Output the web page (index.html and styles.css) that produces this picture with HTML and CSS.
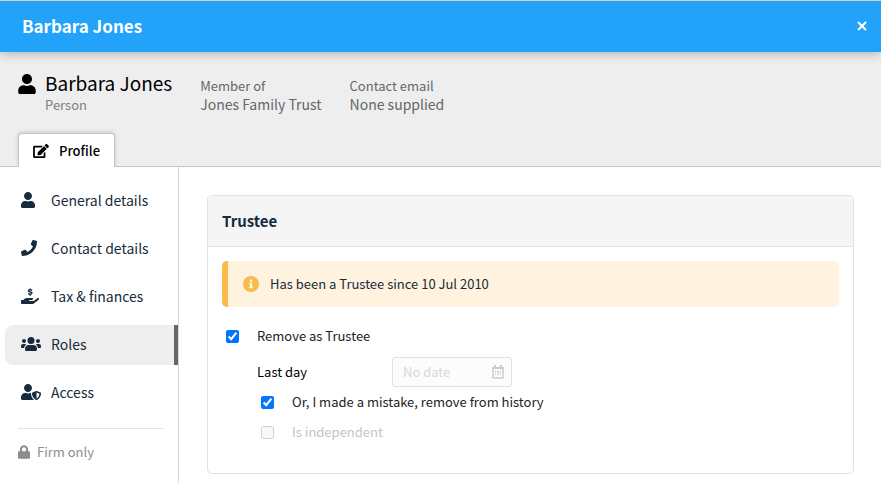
FILE: index.html
```
<!DOCTYPE html>
<html lang="en">
<head>
  <meta charset="UTF-8">
  <meta name="viewport" content="width=device-width, initial-scale=1">
  <title>Barbara Jones - Roles</title>
  <link rel="stylesheet" href="styles.css">
</head>
<body>

  <header class="titlebar">
    <h1>Barbara Jones</h1>
    <button type="button" class="close" aria-label="Close">
      <svg width="10" height="10" viewBox="0 0 10 10"><path d="M1 1l8 8M9 1l-8 8" stroke="currentColor" stroke-width="2"/></svg>
    </button>
  </header>

  <section class="summary">
    <div class="person">
      <svg class="person-icon" width="18" height="20" viewBox="0 0 448 512"><path d="M224 256c70.700 0 128-57.300 128-128S294.700 0 224 0 96 57.300 96 128s57.300 128 128 128zm89.600 32h-16.700c-22.200 10.200-46.900 16-72.900 16s-50.600-5.800-72.900-16h-16.700C60.200 288 0 348.200 0 422.400V464c0 26.500 21.500 48 48 48h352c26.500 0 48-21.500 48-48v-41.600c0-74.200-60.200-134.400-134.400-134.400z"/></svg>
      <div class="person-name">
        <h2>Barbara Jones</h2>
        <p>Person</p>
      </div>
      <dl class="fact">
        <dt>Member of</dt>
        <dd>Jones Family Trust</dd>
      </dl>
      <dl class="fact">
        <dt>Contact email</dt>
        <dd>None supplied</dd>
      </dl>
    </div>

    <nav class="tabs">
      <a href="#profile" class="tab">
        <svg width="16" height="14" viewBox="0 0 576 512"><path d="M402.600 83.200l90.200 90.200c3.800 3.800 3.800 10 0 13.800L274.400 405.600l-92.800 10.300c-12.400 1.400-22.900-9.100-21.500-21.500l10.300-92.800L388.800 83.200c3.800-3.800 10-3.800 13.800 0zm162-22.900l-48.800-48.800c-15.200-15.200-39.900-15.200-55.200 0l-35.400 35.400c-3.800 3.800-3.800 10 0 13.800l90.200 90.200c3.800 3.800 10 3.800 13.800 0l35.400-35.400c15.200-15.300 15.200-40 0-55.200zM384 346.200V448H64V128h229.800c3.200 0 6.200-1.300 8.500-3.500l40-40c7.600-7.600 2.200-20.500-8.500-20.500H48C21.500 64 0 85.500 0 112v352c0 26.500 21.500 48 48 48h352c26.500 0 48-21.500 48-48V306.200c0-10.700-12.900-16-20.500-8.500l-40 40c-2.200 2.300-3.500 5.300-3.500 8.500z"/></svg>
        Profile
      </a>
    </nav>
  </section>

  <div class="layout">
    <aside class="sidebar">
      <nav class="menu">
        <a href="#general">
          <span class="icon"><svg width="14" height="16" viewBox="0 0 448 512"><path d="M224 256c70.700 0 128-57.300 128-128S294.700 0 224 0 96 57.300 96 128s57.300 128 128 128zm89.600 32h-16.700c-22.200 10.200-46.900 16-72.900 16s-50.600-5.800-72.900-16h-16.700C60.200 288 0 348.200 0 422.400V464c0 26.500 21.500 48 48 48h352c26.500 0 48-21.500 48-48v-41.600c0-74.200-60.200-134.400-134.400-134.400z"/></svg></span>
          General details
        </a>
        <a href="#contact">
          <span class="icon"><svg width="16" height="16" viewBox="0 0 512 512"><path d="M493.400 24.600l-104-24c-11.300-2.600-22.900 3.300-27.500 13.900l-48 112c-4.200 9.800-1.400 21.300 6.900 28l60.600 49.600c-36 76.700-98.900 140.500-177.200 177.200l-49.600-60.600c-6.800-8.300-18.200-11.100-28-6.900l-112 48C3.900 366.500-2 378.100.6 389.400l24 104C27.100 504.200 36.700 512 48 512c256.100 0 464-207.500 464-464 0-11.200-7.700-20.900-18.600-23.400z"/></svg></span>
          Contact details
        </a>
        <a href="#tax">
          <span class="icon"><svg width="18" height="16" viewBox="0 0 576 512"><path d="M565.300 328.100c-11.800-10.700-30.200-10-42.600 0L430.300 402c-11.300 9.100-25.400 14-40 14H272c-8.800 0-16-7.200-16-16s7.200-16 16-16h78.300c15.900 0 30.700-10.900 33.300-26.600 3.300-20-12.100-37.400-31.600-37.400H192c-27 0-53.100 9.300-74.100 26.300L71.400 384H16c-8.800 0-16 7.200-16 16v96c0 8.800 7.200 16 16 16h356.800c14.500 0 28.600-4.900 40-14L564 377c15.200-12.100 16.400-35.300 1.300-48.900z"/><path d="M355 76c-20-14-40-18-62-18-64 0-66 48-30 60l60 18c40 14 34 62-30 62-26 0-46-8-62-20M294 12v46M294 198v46" fill="none" stroke="currentColor" stroke-width="46"/></svg></span>
          Tax &amp; finances
        </a>
        <a href="#roles" class="active" aria-current="page">
          <span class="icon"><svg width="20" height="16" viewBox="0 0 640 512"><circle cx="320" cy="144" r="112"/><circle cx="96" cy="160" r="64"/><circle cx="544" cy="160" r="64"/><path d="M243 288h154c64 0 115 52 115 115v29c0 27-21 48-48 48H176c-27 0-48-21-48-48v-29c0-63 51-115 115-115z"/><path d="M64 256h64c18 0 34 7 45 19-40 22-68 60-74 109H32c-18 0-32-14-32-32v-32c0-35 29-64 64-64zM576 256h-64c-18 0-34 7-45 19 40 22 68 60 74 109h67c18 0 32-14 32-32v-32c0-35-29-64-64-64z"/></svg></span>
          Roles
        </a>
        <a href="#access">
          <span class="icon"><svg width="20" height="16" viewBox="0 0 640 512"><path d="M622.300 271.100l-115.200-45c-4.100-1.600-12.600-3.700-22.200 0l-115.200 45c-10.700 4.200-17.700 14-17.700 24.900 0 111.600 68.700 188.800 132.900 213.900 9.600 3.700 18 1.600 22.200 0C558.400 489.900 640 420.500 640 296c0-10.900-7-20.700-17.700-24.900zM496 462.400V273.300l95.500 37.300c-5.600 87.100-60.900 135.400-95.500 151.800zM224 256c70.700 0 128-57.300 128-128S294.700 0 224 0 96 57.300 96 128s57.300 128 128 128zm96 40c0-2.500.8-4.800 1.100-7.200-2.500-.1-4.900-.8-7.500-.8h-16.700c-22.200 10.200-46.900 16-72.900 16s-50.600-5.800-72.900-16h-16.700C60.200 288 0 348.200 0 422.400V464c0 26.500 21.500 48 48 48h352c6.800 0 13.300-1.500 19.200-4-54-42.900-99.200-116.700-99.200-212z"/></svg></span>
          Access
        </a>
      </nav>
      <p class="firm-only">
        <svg width="12" height="14" viewBox="0 0 448 512"><path d="M400 224h-24v-72C376 68.200 307.800 0 224 0S72 68.200 72 152v72H48c-26.500 0-48 21.500-48 48v192c0 26.500 21.500 48 48 48h352c26.500 0 48-21.500 48-48V272c0-26.500-21.500-48-48-48zm-104 0H152v-72c0-39.700 32.300-72 72-72s72 32.300 72 72v72z"/></svg>
        Firm only
      </p>
    </aside>

    <main class="content">
      <section class="card">
        <h3>Trustee</h3>
        <form class="card-body">
          <p class="notice">
            <svg width="16" height="16" viewBox="8 8 496 496"><path d="M256 8C119 8 8 119 8 256c0 137 111 248 248 248s248-111 248-248C504 119 393 8 256 8zm0 110c23 0 42 19 42 42s-19 42-42 42-42-19-42-42 19-42 42-42zm56 254c0 7-5 12-12 12h-88c-7 0-12-5-12-12v-24c0-7 5-12 12-12h12v-64h-12c-7 0-12-5-12-12v-24c0-7 5-12 12-12h64c7 0 12 5 12 12v100h12c7 0 12 5 12 12v24z"/></svg>
            Has been a Trustee since 10 Jul 2010
          </p>

          <label class="row"><input type="checkbox" checked>Remove as Trustee</label>

          <div class="nested">
            <div class="row date-row">
              <label for="last-day">Last day</label>
              <div class="date-field">
                <input type="text" id="last-day" placeholder="No date" disabled>
                <svg width="12" height="14" viewBox="0 0 12 14"><path d="M1 3h10v10H1z" fill="none" stroke="currentColor" stroke-width="1.500"/><path d="M0 2h12v2H0zM2 0h2v3H2zM8 0h2v3H8zM3 6h1v2H3zM5 6h2v2H5zM8 6h1v2H8zM3 9h1v1H3zM5 9h2v1H5zM8 9h1v1H8z"/></svg>
              </div>
            </div>
            <label class="row"><input type="checkbox" checked>Or, I made a mistake, remove from history</label>
            <label class="row disabled"><input type="checkbox" disabled>Is independent</label>
          </div>
        </form>
      </section>
    </main>
  </div>

</body>
</html>
```
FILE: styles.css
```
* {
  box-sizing: border-box;
}

body {
  font-family: "Noto Sans CJK SC", "Open Sans", sans-serif;
  font-size: 13px;
  line-height: 20px;
  margin: 0;
  min-height: 100vh;
  display: flex;
  flex-direction: column;
  color: #222;
  background: #fff;
}

h1, h2, h3, p, dl, dd {
  margin: 0;
}

svg {
  fill: currentColor;
  flex: none;
}

a {
  color: inherit;
  text-decoration: none;
}

/* title bar */
.titlebar {
  display: flex;
  align-items: center;
  justify-content: space-between;
  height: 52px;
  padding: 0 14px 2px 22px;
  border-top: 1px solid #d0d0d0;
  background: #22a3f9;
  color: #fff;
  box-shadow: 0 2px 10px rgba(0, 0, 0, 0.25);
  z-index: 1;
}

.titlebar h1 {
  font-size: 17px;
  font-weight: bold;
}

.close {
  display: flex;
  padding: 0;
  border: none;
  background: none;
  color: #fff;
  cursor: pointer;
}

/* person summary */
.summary {
  padding: 19px 18px 0;
  background: #eee;
  border-bottom: 1px solid #c4c4c4;
}

.person {
  display: flex;
  color: #666;
}

.person-icon {
  margin: 3px 9px 0 0;
  color: #000;
}

.person-name h2 {
  font-size: 19px;
  font-weight: normal;
  line-height: 24px;
  color: #000;
}

.person-name p {
  color: #808080;
}

.fact {
  margin: 5px 0 0 28px;
}

.fact dd {
  font-size: 14px;
  line-height: 16px;
}

.tabs {
  display: flex;
  margin-top: 18px;
}

.tab {
  display: flex;
  align-items: center;
  gap: 10px;
  height: 34px;
  margin-bottom: -1px;
  padding: 0 14px;
  border: 1px solid #c4c4c4;
  border-bottom: none;
  border-radius: 4px 4px 0 0;
  background: #fff;
  color: #000;
  font-weight: 500;
  box-shadow: 0 -1px 4px rgba(0, 0, 0, 0.15);
  clip-path: inset(-6px -6px 0);
}

/* sidebar */
.layout {
  display: flex;
  flex: 1;
}

.sidebar {
  flex: none;
  width: 179px;
  padding: 14px 0 0 5px;
  border-right: 1px solid #d8d8d8;
}

.menu {
  display: flex;
  flex-direction: column;
  gap: 8px;
  color: #172b3d;
  font-size: 14px;
}

.menu a {
  display: flex;
  align-items: center;
  height: 40px;
  padding: 0 0 2px 16px;
  border-right: 4px solid transparent;
  border-radius: 8px 0 0 8px;
}

.menu .active {
  background: #eee;
  border-right-color: #666;
}

.icon {
  display: flex;
  width: 30px;
}

.firm-only {
  display: flex;
  align-items: center;
  gap: 7px;
  margin: 15px 14px 0 13px;
  padding-top: 13px;
  border-top: 1px solid #e2e2e2;
  color: #8c8c8c;
}

/* roles */
.content {
  flex: 1;
  padding: 28px 27px 9px 28px;
}

.card {
  border: 1px solid #e2e2e2;
  border-radius: 5px;
  overflow: hidden;
}

.card h3 {
  padding: 15px 14px;
  background: #f5f5f5;
  border-bottom: 1px solid #e2e2e2;
  color: #172b3d;
  font-size: 15px;
  font-weight: bold;
}

.card-body {
  padding: 14px 14px 26px;
}

.notice {
  display: flex;
  align-items: center;
  gap: 11px;
  height: 46px;
  margin-bottom: 14px;
  padding-left: 15px;
  border-left: 6px solid #f9bb4b;
  border-radius: 5px;
  background: #fff3e0;
  color: #172b3d;
}

.notice svg {
  color: #f9bb4b;
}

.row {
  display: flex;
  align-items: center;
  height: 30px;
}

.row input[type="checkbox"] {
  width: 13px;
  height: 13px;
  margin: 0 18px 0 4px;
}

.nested {
  margin-top: 6px;
  padding-left: 35px;
}

.date-row {
  color: #000;
}

.date-row label {
  width: 135px;
}

.date-field {
  display: flex;
  align-items: center;
  width: 120px;
  height: 30px;
  padding: 0 7px 0 10px;
  border: 1px solid #e2e2e2;
  border-radius: 3px;
  background: #fcfcfc;
  color: #ccc;
}

.date-field input {
  flex: 1;
  min-width: 0;
  padding: 0;
  border: none;
  background: none;
  font: inherit;
}

.date-field input::placeholder {
  color: #d8d8d8;
}

.disabled {
  color: #c4c4c4;
}
```
